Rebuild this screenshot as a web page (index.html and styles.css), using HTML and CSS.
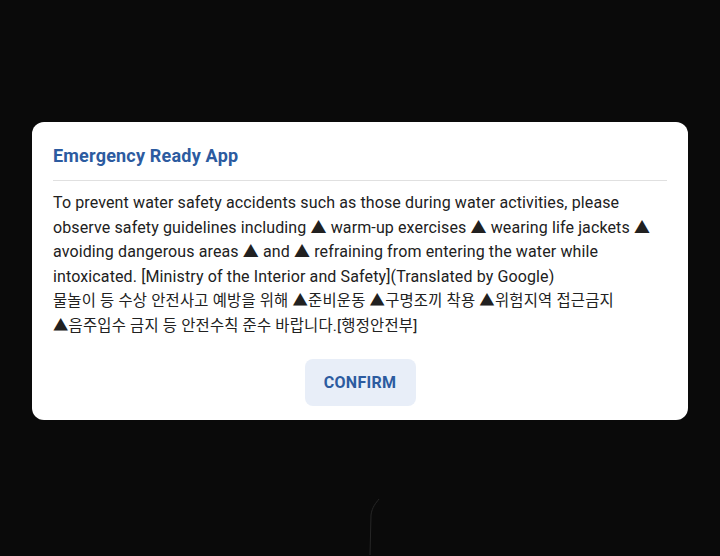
FILE: index.html
```html
<!DOCTYPE html>
<html lang="ko">
<head>
<meta charset="utf-8">
<link rel="stylesheet" href="styles.css">
</head>
<body>
<div class="screen">
  <div class="dialog">
    <h1 class="title">Emergency Ready App</h1>
    <hr class="divider">
    <p class="message">To prevent water safety accidents such as those during water activities, please observe safety guidelines including ▲ warm-up exercises ▲ wearing life jackets ▲ avoiding dangerous areas ▲ and ▲ refraining from entering the water while intoxicated. [Ministry of the Interior and Safety](Translated by Google)<br><span class="ko">물놀이 등 수상 안전사고 예방을 위해 <span class="nb">▲준비운동</span> <span class="nb">▲구명조끼</span> 착용 <span class="nb">▲위험지역</span> 접근금지 <span class="nb">▲음주입수</span> 금지 등 안전수칙 준수 바랍니다.[행정안전부]</span></p>
    <div class="actions">
      <button class="confirm">CONFIRM</button>
    </div>
  </div>
  <svg class="streak" width="20" height="60" viewBox="0 0 20 60"><path d="M13 2 C10 6 6 10 5 18 L4 58" fill="none" stroke="#262626" stroke-width="1"/></svg>
</div>
</body>
</html>
```
FILE: styles.css
```css
html, body {
  margin: 0;
  padding: 0;
  background: #0a0a0a;
}
.screen {
  position: relative;
  width: 720px;
  height: 556px;
  overflow: hidden;
  padding-top: 122px;
  box-sizing: border-box;
}
.dialog {
  margin-left: 32px;
  width: 656px;
  height: 298px;
  box-sizing: border-box;
  background: #ffffff;
  border-radius: 12px;
  padding: 22px 21px 15px 21px;
  font-family: Roboto, "Noto Sans CJK KR", sans-serif;
}
.title {
  margin: 0;
  font-size: 18px;
  letter-spacing: 0.2px;
  line-height: 24px;
  font-weight: 700;
  color: #2c5ba0;
}
.divider {
  margin: 12px 0 0 0;
  border: none;
  height: 1px;
  background: #e0e0e0;
}
.message {
  margin: 10px 0 0 0;
  font-size: 16px;
  letter-spacing: 0.12px;
  line-height: 24.6px;
  color: #212121;
}
.ko {
  font-size: 15.4px;
  letter-spacing: 0.2px;
  word-break: keep-all;
}
.nb {
  white-space: nowrap;
}
.actions {
  display: flex;
  justify-content: center;
  margin-top: 20px;
}
.confirm {
  width: 111px;
  height: 47px;
  border: none;
  border-radius: 8px;
  background: #e8eef8;
  color: #2c5ba0;
  font-family: Roboto, sans-serif;
  font-size: 16px;
  letter-spacing: 0.3px;
  font-weight: 700;
  padding: 0;
}
.streak {
  position: absolute;
  left: 366px;
  top: 497px;
}
```
